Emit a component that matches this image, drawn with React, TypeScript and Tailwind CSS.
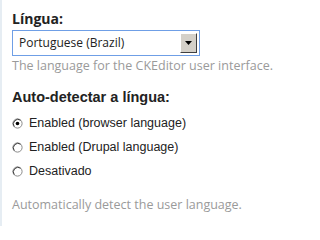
import React from "react";

const Radio = ({ checked }: { checked?: boolean }) => (
  <svg width="11" height="11" viewBox="0 0 11 11" className="shrink-0">
    <circle cx="5.5" cy="5.5" r="4.6" fill="#fff" stroke="#8a8a8a" strokeWidth="1" />
    <path d="M2.2 8.6 A4.6 4.6 0 0 1 8.6 2.2" fill="none" stroke="#404040" strokeWidth="1" />
    {checked && <circle cx="5.5" cy="5.5" r="1.8" fill="#000" />}
  </svg>
);

const options = [
  { label: "Enabled (browser language)", checked: true },
  { label: "Enabled (Drupal language)" },
  { label: "Desativado" },
];

export default function App() {
  return (
    <div className="w-[301px] h-[226px] bg-white overflow-hidden">
      <div className="h-full border-l-2 border-[#e6edf3] pl-[10px] pt-[10px]">
        <div className="font-['Open_Sans'] font-bold text-[14px] text-[#222] leading-[18px]">
          Língua:
        </div>
        <div className="mt-[2px] w-[188px] h-[26px] border border-[#6f9fe6] flex items-center justify-between pl-[6px] pr-[2px]">
          <span className="font-['Open_Sans'] text-[12px] text-[#222]">Portuguese (Brazil)</span>
          <div className="w-[17px] h-[20px] bg-[#d4d0c8] border border-t-white border-l-white border-r-[#404040] border-b-[#404040] flex items-center justify-center">
            <svg width="7" height="4" viewBox="0 0 7 4">
              <path d="M0 0H7L3.5 4Z" fill="#000" />
            </svg>
          </div>
        </div>
        <div className="mt-[2px] font-['Open_Sans'] text-[12.5px] text-[#9a9a9a] leading-[15px]">
          The language for the CKEditor user interface.
        </div>
        <div className="mt-[16px] font-['Liberation_Sans'] font-bold text-[14.5px] text-[#222] leading-[16px]">
          Auto-detectar a língua:
        </div>
        <div className="mt-[6px] flex flex-col">
          {options.map((o) => (
            <div key={o.label} className="h-[24px] flex items-center gap-[6px] font-['Liberation_Sans'] text-[12.5px] text-[#222] leading-[14px]">
              <Radio checked={o.checked} />
              {o.label}
            </div>
          ))}
        </div>
        <div className="mt-[14px] font-['Open_Sans'] text-[12.5px] text-[#9a9a9a] leading-[15px]">
          Automatically detect the user language.
        </div>
      </div>
    </div>
  );
}
